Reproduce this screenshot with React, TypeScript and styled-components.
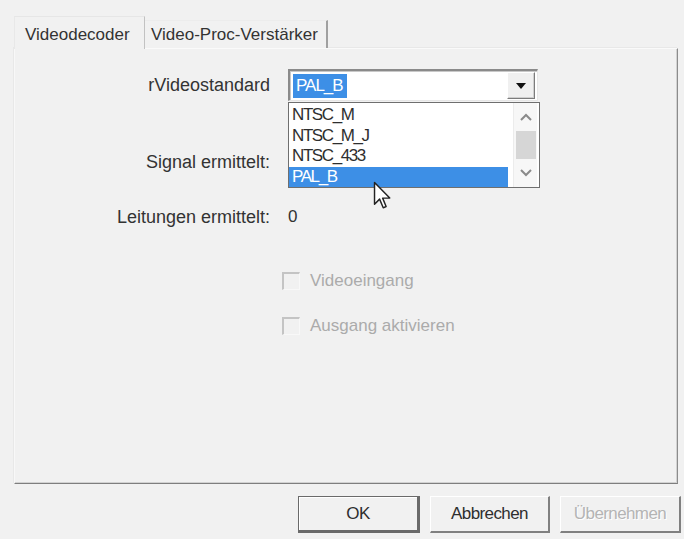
import React from "react";
import styled, { createGlobalStyle, css } from "styled-components";

const Global = createGlobalStyle`
  html, body { margin: 0; padding: 0; background: #f1f1f1; }
  body { font-family: "Liberation Sans", Arial, sans-serif; }
  * { box-sizing: border-box; }
`;

const Dialog = styled.div`
  position: relative;
  width: 684px;
  height: 539px;
  padding: 16px 6px 0 14px;
  background: #f1f1f1;
  color: #333;
  font-size: 17px;
  overflow: hidden;
`;

const TabStrip = styled.div`
  display: flex;
  align-items: flex-end;
  height: 32px;
  position: relative;
  z-index: 1;
`;

const Tab = styled.div<{ $active?: boolean; $w: number; $pl: number }>`
  width: ${(p) => p.$w}px;
  padding-left: ${(p) => p.$pl}px;
  display: flex;
  align-items: center;
  white-space: nowrap;
  background: #f1f1f1;
  ${(p) =>
    p.$active
      ? css`
          height: 33px;
          margin-bottom: -1px;
          padding-top: 3px;
          border-top: 1px solid #e6e6e6;
          border-left: 1px solid #e8e8e8;
          border-right: 1px solid #c2c2c2;
        `
      : css`
          height: 28px;
          border-top: 1px solid #ececec;
          border-right: 2px solid #a0a0a0;
        `}
`;

const Panel = styled.div`
  width: 664px;
  height: 436px;
  border-top: 1px solid #fafafa;
  border-left: 1px solid #f8f8f8;
  border-right: 1px solid #8c8c8c;
  border-bottom: 1px solid #7e7e7e;
  box-shadow: inset -1px -1px 0 #d2d2d2, -1px -1px 0 #e8e8e8;
`;

const Row = styled.div<{ $top: number; $h: number }>`
  display: grid;
  grid-template-columns: 255px 1fr;
  column-gap: 18px;
  align-items: center;
  height: ${(p) => p.$h}px;
  margin-top: ${(p) => p.$top}px;
`;

const Label = styled.div`
  text-align: right;
  white-space: nowrap;
  font-size: 18px;
`;

const Value = styled.div`
  white-space: nowrap;
`;

const ComboWrap = styled.div`
  position: relative;
  width: 250px;
  height: 32px;
`;

const ComboBox = styled.div`
  display: flex;
  align-items: center;
  height: 100%;
  background: #fff;
  border-top: 2px solid #8a8a8a;
  border-left: 2px solid #8a8a8a;
  border-right: 1px solid #e6e6e6;
  border-bottom: 1px solid #e6e6e6;
  box-shadow: inset 1px 1px 0 #c8c8c8;
  padding: 2px 2px 2px 3px;
`;

const ComboText = styled.div`
  flex: 1;
  display: flex;
  align-items: center;
`;

const Selected = styled.span`
  background: #3d8fe6;
  color: #fff;
  padding: 2px 4px 2px 3px;
  letter-spacing: -1px;
`;

const DropButton = styled.div`
  width: 28px;
  height: 27px;
  display: flex;
  align-items: center;
  justify-content: center;
  background: #f0f0f0;
  border-top: 1px solid #fff;
  border-left: 1px solid #fff;
  border-right: 1px solid #7c7c7c;
  border-bottom: 1px solid #7c7c7c;
  box-shadow: inset -1px -1px 0 #cfcfcf;
`;

const ListBox = styled.div`
  position: absolute;
  left: 0;
  top: 33px;
  width: 252px;
  height: 86px;
  background: #fff;
  border: 1px solid #6f6f6f;
  display: flex;
  z-index: 2;
`;

const ListItems = styled.div`
  width: 219px;
  padding-top: 2px;
`;

const Item = styled.div<{ $sel?: boolean }>`
  height: 20.5px;
  display: flex;
  align-items: center;
  padding-left: 3px;
  letter-spacing: -1.4px;
  font-size: 17px;
  color: ${(p) => (p.$sel ? "#fff" : "#2e2e2e")};
  background: ${(p) => (p.$sel ? "#3d8fe6" : "transparent")};
`;

const ScrollBar = styled.div`
  margin-left: 5px;
  width: 24px;
  display: flex;
  flex-direction: column;
  align-items: center;
  background: #f7f7f7;
  border-left: 1px solid #ececec;
`;

const ScrollArrow = styled.div`
  height: 28px;
  width: 100%;
  display: flex;
  align-items: center;
  justify-content: center;
`;

const Thumb = styled.div`
  width: 20px;
  height: 28px;
  background: #d6d6d6;
`;

const ScrollGap = styled.div`
  flex: 1;
`;

const CheckRow = styled.div<{ $top: number }>`
  display: flex;
  align-items: center;
  gap: 10px;
  height: 24px;
  margin-top: ${(p) => p.$top}px;
  padding-left: 267px;
  color: #ababab;
  white-space: nowrap;
`;

const CheckBox = styled.span`
  width: 18px;
  height: 18px;
  background: #f1f1f1;
  border-top: 2px solid #c4c4c4;
  border-left: 2px solid #c4c4c4;
  border-right: 1px solid #f8f8f8;
  border-bottom: 1px solid #f8f8f8;
`;

const ButtonBar = styled.div`
  display: flex;
  justify-content: flex-end;
  gap: 10px;
  margin-top: 12px;
  margin-right: -3px;
`;

const Button = styled.div<{ $default?: boolean; $disabled?: boolean; $w: number }>`
  width: ${(p) => p.$w}px;
  height: 37px;
  display: flex;
  align-items: center;
  justify-content: center;
  background: #f1f1f1;
  color: ${(p) => (p.$disabled ? "#b4b4b4" : "#2e2e2e")};
  text-shadow: ${(p) => (p.$disabled ? "1px 1px 0 #fff" : "none")};
  letter-spacing: -0.6px;
  border-top: 1px solid #fff;
  border-left: 1px solid #fff;
  border-right: 2px solid #808080;
  border-bottom: 2px solid #808080;
  ${(p) =>
    p.$default &&
    css`
      border: 1px solid #6a6a6a;
      border-right: 3px solid #6a6a6a;
      border-bottom: 3px solid #6a6a6a;
      box-shadow: inset 1px 1px 0 #fff;
    `}
`;

const Cursor = styled.svg`
  position: absolute;
  left: 373px;
  top: 181px;
  z-index: 5;
`;

export default function App() {
  return (
    <>
      <Global />
      <Dialog>
        <TabStrip>
          <Tab $active $w={131} $pl={10}>
            Videodecoder
          </Tab>
          <Tab $w={183} $pl={6}>
            Video-Proc-Verstärker
          </Tab>
        </TabStrip>
        <Panel>
          <Row $top={20} $h={32}>
            <Label>rVideostandard</Label>
            <ComboWrap>
              <ComboBox>
                <ComboText>
                  <Selected>PAL_B</Selected>
                </ComboText>
                <DropButton>
                  <svg width="10" height="6" viewBox="0 0 10 6">
                    <path d="M0 0 H10 L5 6 Z" fill="#111" />
                  </svg>
                </DropButton>
              </ComboBox>
              <ListBox>
                <ListItems>
                  <Item>NTSC_M</Item>
                  <Item>NTSC_M_J</Item>
                  <Item>NTSC_433</Item>
                  <Item $sel>PAL_B</Item>
                </ListItems>
                <ScrollBar>
                  <ScrollArrow>
                    <svg width="12" height="8" viewBox="0 0 12 8">
                      <path d="M1 7 L6 2 L11 7" fill="none" stroke="#8a8a8a" strokeWidth="2" />
                    </svg>
                  </ScrollArrow>
                  <Thumb />
                  <ScrollGap />
                  <ScrollArrow>
                    <svg width="12" height="8" viewBox="0 0 12 8">
                      <path d="M1 1 L6 6 L11 1" fill="none" stroke="#8a8a8a" strokeWidth="2" />
                    </svg>
                  </ScrollArrow>
                </ScrollBar>
              </ListBox>
            </ComboWrap>
          </Row>
          <Row $top={49} $h={24}>
            <Label>Signal ermittelt:</Label>
            <Value />
          </Row>
          <Row $top={31} $h={24}>
            <Label>Leitungen ermittelt:</Label>
            <Value>0</Value>
          </Row>
          <CheckRow $top={40}>
            <CheckBox />
            Videoeingang
          </CheckRow>
          <CheckRow $top={21}>
            <CheckBox />
            Ausgang aktivieren
          </CheckRow>
        </Panel>
        <ButtonBar>
          <Button $default $w={122}>
            OK
          </Button>
          <Button $w={120}>Abbrechen</Button>
          <Button $disabled $w={121}>
            Übernehmen
          </Button>
        </ButtonBar>
        <Cursor width="19" height="29" viewBox="0 0 13 20">
          <path
            d="M1 1 L1 16 L4.5 12.5 L7 18.5 L9 17.6 L6.6 11.8 L11.5 11.8 Z"
            fill="#fff"
            stroke="#222"
            strokeWidth="1"
            strokeLinejoin="round"
          />
        </Cursor>
      </Dialog>
    </>
  );
}
